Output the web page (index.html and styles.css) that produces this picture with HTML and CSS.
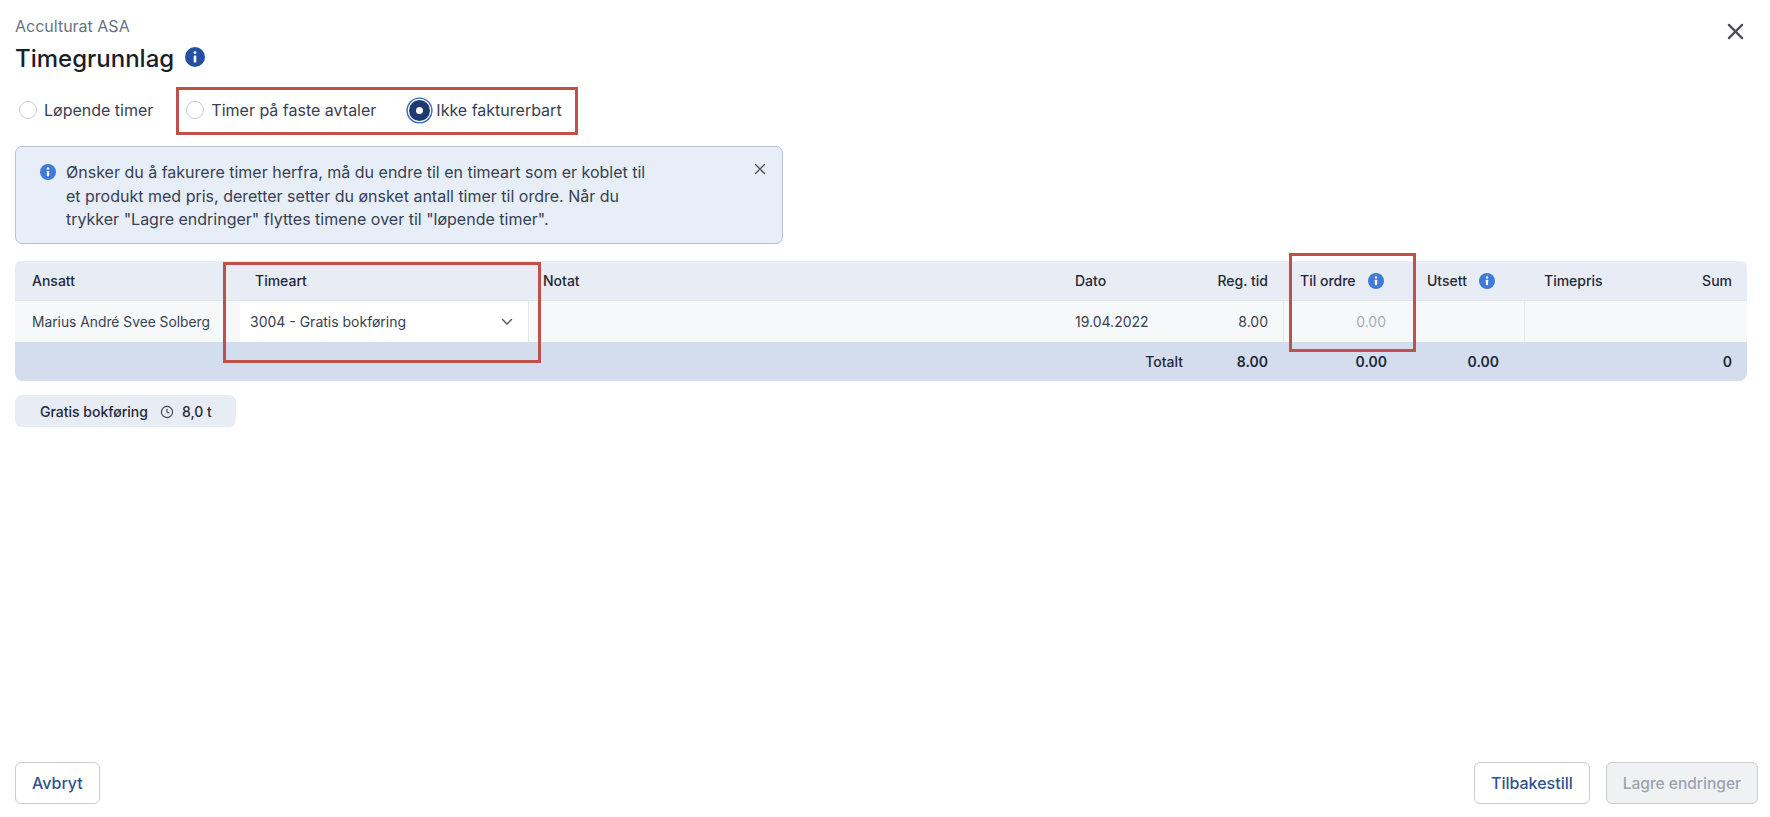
FILE: index.html
```html
<!DOCTYPE html>
<html lang="no">
<head>
<meta charset="utf-8">
<title>Timegrunnlag</title>
<link rel="stylesheet" href="styles.css">
</head>
<body>
<div class="page">
  <header class="head">
    <div>
      <div class="company">Acculturat ASA</div>
      <h1 class="title">Timegrunnlag
        <svg class="ic-title" viewBox="0 0 20 20"><circle cx="10" cy="10" r="10" fill="#2450a4"/><circle cx="10" cy="5.6" r="1.4" fill="#fff"/><rect x="8.7" y="8.4" width="2.6" height="7" rx=".6" fill="#fff"/></svg>
      </h1>
    </div>
    <svg class="close" viewBox="0 0 18 18"><path d="M2 2l14 14M16 2L2 16" stroke="#4b4f55" stroke-width="2.4" stroke-linecap="round" fill="none"/></svg>
  </header>

  <div class="radios">
    <label class="radio"><span class="dot"></span>Løpende timer</label>
    <label class="radio r2"><span class="dot"></span>Timer på faste avtaler</label>
    <label class="radio r3"><span class="dot on"></span>Ikke fakturerbart</label>
  </div>

  <div class="alert">
    <svg class="ic-alert" viewBox="0 0 20 20"><circle cx="10" cy="10" r="10" fill="#3f7ad6"/><circle cx="10" cy="5.6" r="1.5" fill="#fff"/><rect x="8.6" y="8.4" width="2.8" height="7" rx=".6" fill="#fff"/></svg>
    <p class="alert-text">Ønsker du å fakurere timer herfra, må du endre til en timeart som er koblet til<br>et produkt med pris, deretter setter du ønsket antall timer til ordre. Når du<br>trykker "Lagre endringer" flyttes timene over til "løpende timer".</p>
    <svg class="alert-x" viewBox="0 0 12 12"><path d="M1.5 1.5l9 9M10.5 1.5l-9 9" stroke="#4b5563" stroke-width="1.4" stroke-linecap="round" fill="none"/></svg>
  </div>

  <div class="table">
    <div class="row hrow">
      <div class="c">Ansatt</div>
      <div class="c c-timeart">Timeart</div>
      <div class="c">Notat</div>
      <div class="c">Dato</div>
      <div class="c right">Reg. tid</div>
      <div class="c c-gap">Til ordre <svg class="ic" viewBox="0 0 20 20"><circle cx="10" cy="10" r="10" fill="#3f7ad6"/><circle cx="10" cy="5.6" r="1.5" fill="#fff"/><rect x="8.6" y="8.4" width="2.8" height="7" rx=".6" fill="#fff"/></svg></div>
      <div class="c c-gap">Utsett <svg class="ic" viewBox="0 0 20 20"><circle cx="10" cy="10" r="10" fill="#3f7ad6"/><circle cx="10" cy="5.6" r="1.5" fill="#fff"/><rect x="8.6" y="8.4" width="2.8" height="7" rx=".6" fill="#fff"/></svg></div>
      <div class="c c-price">Timepris</div>
      <div class="c right">Sum</div>
    </div>
    <div class="row brow">
      <div class="c c-name">Marius André Svee Solberg</div>
      <div class="c select">3004 - Gratis bokføring
        <svg class="chev" viewBox="0 0 12 8"><path d="M1.5 1.5L6 6l4.5-4.5" stroke="#4b5563" stroke-width="1.4" fill="none" stroke-linecap="round"/></svg>
      </div>
      <div class="c"></div>
      <div class="c">19.04.2022</div>
      <div class="c right">8.00</div>
      <div class="c right muted bl">0.00</div>
      <div class="c"></div>
      <div class="c bl"></div>
      <div class="c"></div>
    </div>
    <div class="row trow">
      <div class="c"></div>
      <div class="c"></div>
      <div class="c"></div>
      <div class="c right total-label">Totalt</div>
      <div class="c right">8.00</div>
      <div class="c right">0.00</div>
      <div class="c right">0.00</div>
      <div class="c"></div>
      <div class="c right">0</div>
    </div>
  </div>

  <div class="chip">Gratis bokføring
    <svg class="clock" viewBox="0 0 14 14"><circle cx="7" cy="7" r="5.6" stroke="#374151" stroke-width="1.1" fill="none"/><path d="M7 3.8V7l2.4 1" stroke="#374151" stroke-width="1.1" fill="none"/></svg>
    8,0 t</div>

  <footer class="foot">
    <button class="btn">Avbryt</button>
    <div class="foot-right">
      <button class="btn">Tilbakestill</button>
      <button class="btn off">Lagre endringer</button>
    </div>
  </footer>

  <div class="mark m1"></div>
  <div class="mark m2"></div>
  <div class="mark m3"></div>
</div>
</body>
</html>
```
FILE: styles.css
```css
* { box-sizing: border-box; }
html, body { margin: 0; height: 100%; }
body { background: #fff; font-family: Inter, "Liberation Sans", sans-serif; color: #1f2937; overflow: hidden; }
.page { position: relative; height: 817px; padding: 16px 12px 13px 15px; display: flex; flex-direction: column; }
.head { display: flex; justify-content: space-between; align-items: flex-start; padding-right: 13px; }
.company { font-size: 16px; line-height: 20px; color: #6b7280; }
.title { margin: 8px 0 0; font-size: 24px; line-height: 30px; font-weight: 500; color: #1b1f27; display: flex; align-items: center; gap: 11px; }
.ic-title { width: 20px; height: 20px; margin-top: -4px; }
.close { width: 17px; height: 17px; margin: 7px 1px 0 0; }
.radios { display: flex; align-items: center; margin-top: 21px; padding-left: 4px; height: 30px; font-size: 16px; color: #374151; }
.radio { display: flex; align-items: center; gap: 7px; }
.r2 { margin-left: 33px; }
.r3 { margin-left: 33px; gap: 6px; }
.dot { width: 18px; height: 18px; border-radius: 50%; border: 1.5px solid #c9ccd1; background: #fff; display: block; }
.dot.on { width: 21px; height: 21px; border: 7px solid #1e3a6e; background: #fff; box-shadow: 0 0 0 1.2px #fff, 0 0 0 2.6px #3a68b4; }
.alert { position: relative; width: 768px; height: 98px; margin-top: 21px; padding: 14px 50px 0 24px; background: #e7eef8; border: 1px solid #b4c2d8; border-radius: 7px; display: flex; gap: 10px; }
.ic-alert { width: 16px; height: 16px; margin-top: 3px; flex: none; }
.alert-text { margin: 0; font-size: 16px; line-height: 23.5px; color: #374151; white-space: nowrap; }
.alert-x { position: absolute; right: 16px; top: 16px; width: 12px; height: 12px; }
.table { margin-top: 17px; width: 1732px; font-size: 14px; border-radius: 6px 6px 8px 8px; overflow: hidden; }
.row { display: grid; grid-template-columns: 225px 289px 531px 130px 93px 127px 114px 116px 107px; }
.c { display: flex; align-items: center; padding: 0 15px 0 17px; white-space: nowrap; min-width: 0; }
.c-name { font-size: 13.8px; }
.right { justify-content: flex-end; }
.hrow { height: 40px; background: #e8ecf4; font-weight: 500; color: #1f2937; border-bottom: 1px solid #dfe3ea; }
.hrow .c:nth-child(2) { padding-left: 15px; }
.hrow .c:nth-child(3) { padding-left: 14px; }
.hrow .c:nth-child(4) { padding-left: 15px; }
.c-gap { gap: 12px; padding-left: 17px; }
.c-price { padding-left: 20px; }
.ic { width: 16px; height: 16px; flex: none; }
.brow { height: 41px; background: #f7f8fa; color: #374151; }
.select { background: #fff; justify-content: space-between; padding: 0 15px 0 10px; font-size: 14px; border-right: 1px solid #e5e7eb; }
.chev { width: 12px; height: 8px; }
.muted { color: #a8adb4; }
.bl { border-left: 1px solid #e8eaee; }
.brow .c:nth-child(4) { padding-left: 15px; }
.brow .c:nth-child(6) { padding-right: 24px; }
.trow { height: 39px; background: #d3ddee; font-weight: 600; color: #1f2937; }
.trow .c:nth-child(6) { padding-right: 23px; }
.trow .c:nth-child(7) { padding-right: 25px; }
.total-label { padding-right: 7px; font-weight: 500; }
.chip { align-self: flex-start; display: flex; align-items: center; margin-top: 14px; width: 221px; height: 32px; padding-left: 25px; background: #e8ecf4; border-radius: 7px; font-size: 14px; font-weight: 500; color: #1f2937; }
.clock { width: 14px; height: 14px; margin: 1px 8px 0 12px; }
.foot { margin-top: auto; display: flex; justify-content: space-between; }
.foot-right { display: flex; gap: 16px; }
.btn { height: 42px; padding: 0 16px; background: #fff; border: 1px solid #c9ccd2; border-radius: 6px; font: 500 16px Inter, "Liberation Sans", sans-serif; color: #2f5291; }
.btn.off { background: #f0f1f3; color: #9ca3af; font-size: 15.5px; }
.mark { position: absolute; border: 3px solid #c0504a; pointer-events: none; }
.m1 { left: 176px; top: 87px; width: 402px; height: 48px; }
.m2 { left: 223px; top: 262px; width: 318px; height: 101px; }
.m3 { left: 1289px; top: 253px; width: 127px; height: 99px; }
```
